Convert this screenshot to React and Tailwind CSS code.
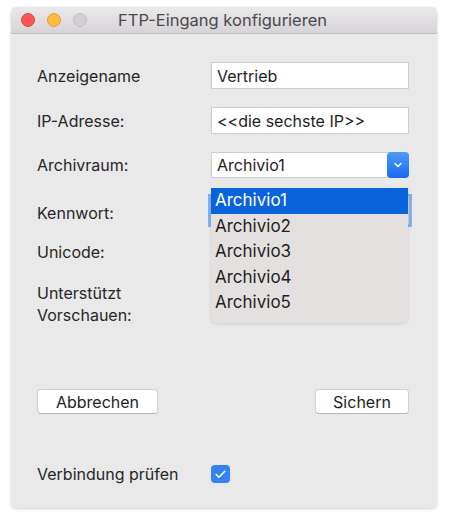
import { Check, ChevronDown } from "lucide-react";

const font = { fontFamily: "Inter, 'Liberation Sans', sans-serif" };

const options = ["Archivio1", "Archivio2", "Archivio3", "Archivio4", "Archivio5"];

const Label = ({ children, className = "" }) => (
    <div className={`w-[174px] shrink-0 text-[16px] text-[#262626] ${className}`}>{children}</div>
);

const Field = ({ value }) => (
    <div className="w-[198px] h-[27px] bg-white border border-[#cdcdcd] flex items-center px-[5px] text-[16px] text-[#1e1e1e]">
        {value}
    </div>
);

const Box = ({ checked }) => (
    <div className={`w-[19px] h-[18px] rounded-[4px] flex items-center justify-center ${checked ? "bg-[#3582f5]" : "bg-white border border-[#c4c4c4]"}`}>
        {checked && <Check className="w-[13px] h-[13px] text-white" strokeWidth={3} />}
    </div>
);

export default function App() {
    return (
        <div className="min-h-screen bg-white pt-[7px] pl-[11px]" style={font}>
            <div className="relative w-[426px] h-[501px] rounded-[5px] bg-[#e9e9e9] shadow-[0_1px_3px_rgba(0,0,0,0.18)] flex flex-col overflow-hidden">
                {/* Title bar */}
                <div className="h-[27px] shrink-0 flex items-center px-[10px] bg-gradient-to-b from-[#ebe9eb] to-[#d6d4d6] border-b border-[#bdbdbd]">
                    <div className="flex items-center gap-[12px]">
                        <div className="w-[14px] h-[14px] rounded-full bg-[#fc5753] border border-[#e2463f]" />
                        <div className="w-[14px] h-[14px] rounded-full bg-[#fdbc40] border border-[#e0a32e]" />
                        <div className="w-[14px] h-[14px] rounded-full bg-[#d2d0d2] border border-[#c2c0c2]" />
                    </div>
                    <div className="ml-[31px] text-[16.5px] text-[#4a4a4a]">FTP-Eingang konfigurieren</div>
                </div>

                {/* Body */}
                <div className="flex-1 flex flex-col pl-[26px] pr-[28px]">
                    <div className="mt-[28px] flex items-center">
                        <Label>Anzeigename</Label>
                        <Field value="Vertrieb" />
                    </div>
                    <div className="mt-[18px] flex items-center">
                        <Label>IP-Adresse:</Label>
                        <Field value="<<die sechste IP>>" />
                    </div>
                    <div className="mt-[18px] flex items-center">
                        <Label>Archivraum:</Label>
                        <div className="w-[198px] h-[26px] bg-white border border-[#cdcdcd] flex items-center text-[16px] text-[#1e1e1e] rounded-r-[4px]">
                            <span className="flex-1 px-[5px]">Archivio1</span>
                            <div className="w-[22px] h-[26px] -mr-px rounded-[4px] bg-gradient-to-b from-[#4d9bf7] to-[#1769ee] flex items-center justify-center">
                                <ChevronDown className="w-[12px] h-[12px] text-white" strokeWidth={3} />
                            </div>
                        </div>
                    </div>
                    <div className="mt-[17px] flex items-center">
                        <Label className="pt-[6px]">Kennwort:</Label>
                        <div className="w-[198px] h-[27px] bg-white border border-[#cdcdcd] ring-[3px] ring-[#86aef3]" />
                    </div>
                    <div className="mt-[17px] flex items-center h-[20px]">
                        <Label>Unicode:</Label>
                        <Box />
                    </div>
                    <div className="mt-[20px] flex items-start">
                        <Label>
                            <div className="leading-[22px]">Unterstützt</div>
                            <div className="leading-[22px]">Vorschauen:</div>
                        </Label>
                        <div className="mt-[9px]">
                            <Box checked />
                        </div>
                    </div>

                    <div className="mt-[63px] flex items-center justify-between">
                        <button className="w-[121px] h-[25px] bg-white rounded-[4px] border border-[#d0d0d0] border-b-[#b5b5b5] text-[16px] text-[#1e1e1e]">
                            Abbrechen
                        </button>
                        <button className="w-[94px] h-[25px] bg-white rounded-[4px] border border-[#d0d0d0] border-b-[#b5b5b5] text-[16px] text-[#1e1e1e]">
                            Sichern
                        </button>
                    </div>

                    <div className="mt-[48px] flex items-center">
                        <Label>Verbindung prüfen</Label>
                        <Box checked />
                    </div>
                </div>

                {/* Open select menu */}
                <div className="absolute left-[200px] top-[181px] w-[197px] h-[135px] bg-[#e5e0e0] rounded-b-[5px] shadow-[0_1px_3px_rgba(0,0,0,0.12)] flex flex-col text-[17px] text-[#1e1e1e]">
                    {options.map((o, i) => (
                        <div
                            key={o}
                            className={`h-[25.5px] flex items-center px-[4px] ${i === 0 ? "bg-[#0b63dc] text-white" : ""}`}
                        >
                            {o}
                        </div>
                    ))}
                </div>
            </div>
        </div>
    );
}
